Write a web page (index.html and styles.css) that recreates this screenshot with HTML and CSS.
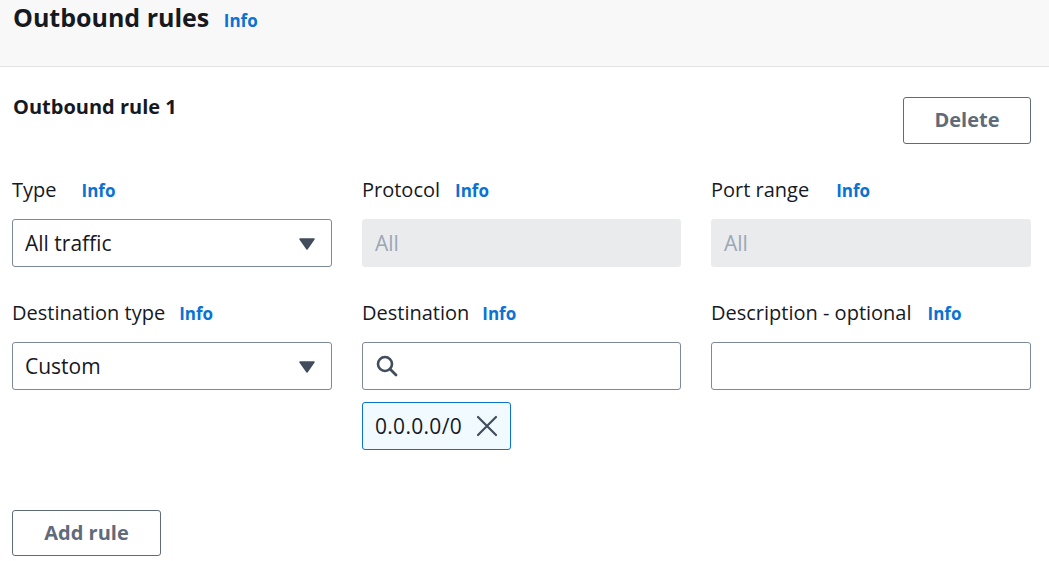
FILE: index.html
```html
<!DOCTYPE html>
<html>
<head>
<meta charset="utf-8">
<link rel="stylesheet" href="styles.css">
</head>
<body>
<div class="panel">
  <header class="panel-header">
    <h2 class="title">Outbound rules <a class="info info-title">Info</a></h2>
  </header>
  <section class="rule">
    <div class="rule-head">
      <h3 class="rule-title">Outbound rule 1</h3>
      <button class="btn btn-delete">Delete</button>
    </div>
    <div class="grid">
      <div class="field">
        <div class="label">Type<a class="info info-type">Info</a></div>
        <div class="control select"><span>All traffic</span>
          <svg class="caret" width="16" height="12" viewBox="0 0 16 12"><path d="M1 1 H15 L8 11 Z" fill="#414d5c" stroke="#414d5c" stroke-width="1.5" stroke-linejoin="round"/></svg>
        </div>
      </div>
      <div class="field">
        <div class="label">Protocol<a class="info info-protocol">Info</a></div>
        <div class="control disabled"><span>All</span></div>
      </div>
      <div class="field">
        <div class="label">Port range<a class="info info-port">Info</a></div>
        <div class="control disabled"><span>All</span></div>
      </div>
      <div class="field">
        <div class="label">Destination type<a class="info info-dtype">Info</a></div>
        <div class="control select"><span>Custom</span>
          <svg class="caret" width="16" height="12" viewBox="0 0 16 12"><path d="M1 1 H15 L8 11 Z" fill="#414d5c" stroke="#414d5c" stroke-width="1.5" stroke-linejoin="round"/></svg>
        </div>
      </div>
      <div class="field">
        <div class="label">Destination<a class="info info-dest">Info</a></div>
        <div class="control search">
          <svg class="search-icon" width="24" height="24" viewBox="0 0 24 24"><circle cx="10" cy="10" r="7" fill="none" stroke="#414d5c" stroke-width="2.6"/><path d="M15 15 L21 21" stroke="#414d5c" stroke-width="2.8" stroke-linecap="round"/></svg>
        </div>
        <div class="token"><span>0.0.0.0/0</span>
          <svg class="x" width="22" height="22" viewBox="0 0 22 22"><path d="M2 2 L20 20 M20 2 L2 20" stroke="#414d5c" stroke-width="2.2" stroke-linecap="round"/></svg>
        </div>
      </div>
      <div class="field">
        <div class="label">Description - optional<a class="info info-desc">Info</a></div>
        <div class="control"></div>
      </div>
    </div>
    <div class="footer">
      <button class="btn btn-add">Add rule</button>
    </div>
  </section>
</div>
</body>
</html>
```
FILE: styles.css
```css
* { box-sizing: border-box; }
html, body { margin: 0; padding: 0; background: #ffffff; }
body {
  font-family: "Open Sans", "Noto Sans", sans-serif;
  color: #16191f;
  width: 1049px;
  height: 561px;
  overflow: hidden;
}
.panel-header {
  background: #f8f8f8;
  height: 67px;
  border-bottom: 1px solid #e3e3e3;
  padding: 0 13px;
}
.title {
  margin: 0;
  font-size: 25px;
  font-weight: 700;
  line-height: 34px;
  color: #16191f;
}
.info {
  color: #0972d3;
  font-weight: 700;
  font-size: 17px;
  text-decoration: none;
}
.info-title { margin-left: 8px; }
.rule { padding: 0 18px 0 12px; }
.rule-head {
  display: flex;
  justify-content: space-between;
  align-items: flex-start;
  padding-top: 30px;
  height: 77px;
}
.rule-title {
  margin: 0;
  font-size: 20px;
  font-weight: 700;
  line-height: 20px;
  padding-left: 1px;
}
.btn {
  background: #fff;
  border: 1px solid #5f6b7a;
  border-radius: 3px;
  color: #5f6b7a;
  font-family: inherit;
  font-weight: 700;
  font-size: 20px;
  padding: 0 0 2px;
}
.btn-delete {
  width: 128px;
  height: 47px;
}
.grid {
  display: grid;
  grid-template-columns: 320px 319px 320px;
  column-gap: 30px;
  row-gap: 32px;
  margin-top: 32px;
}
.label {
  font-size: 20px;
  line-height: 28px;
  height: 28px;
  color: #16191f;
  margin-bottom: 15px;
  white-space: nowrap;
}
.label .info { font-size: 17px; }
.info-type { margin-left: 25px; }
.info-protocol { margin-left: 15px; }
.info-port { margin-left: 27px; }
.info-dtype { margin-left: 14px; }
.info-dest { margin-left: 13px; }
.info-desc { margin-left: 16px; }
.control {
  height: 48px;
  border: 1px solid #7d8998;
  border-radius: 3px;
  display: flex;
  align-items: center;
  padding: 0 12px;
  font-size: 21px;
  background: #fff;
}
.select { justify-content: space-between; }
.caret { margin-right: 4px; margin-top: 1px; }
.disabled {
  background: #e9ebed;
  border-color: #e9ebed;
  color: #9ba7b6;
}
.token {
  margin-top: 12px;
  width: 149px;
  height: 48px;
  border: 1px solid #0972d3;
  background: #f1faff;
  border-radius: 3px;
  display: flex;
  align-items: center;
  padding: 0 12px;
  font-size: 21px;
  letter-spacing: 0.3px;
  gap: 14px;
}
.footer { margin-top: 60px; }
.btn-add {
  width: 149px;
  height: 46px;
}
```
